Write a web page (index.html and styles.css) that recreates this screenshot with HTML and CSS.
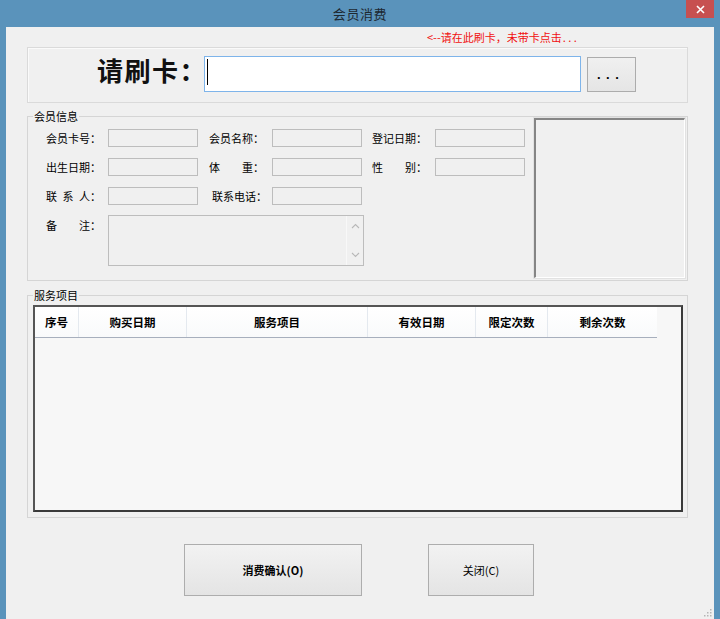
FILE: index.html
```html
<!DOCTYPE html>
<html lang="zh-CN">
<head>
<meta charset="utf-8">
<title>会员消费</title>
<link rel="stylesheet" href="styles.css">
</head>
<body>
<div class="window">
  <div class="titlebar">
    <span class="title">会员消费</span>
    <button class="close" type="button" aria-label="关闭">
      <svg width="9" height="9" viewBox="0 0 9 9"><path d="M1 1 L8 8 M8 1 L1 8" stroke="#fff" stroke-width="1.6" fill="none"/></svg>
    </button>
  </div>
  <div class="client">
    <div class="hint">&lt;--请在此刷卡，未带卡点击<span class="hint-dots">...</span></div>

    <div class="swipe">
      <div class="swipe-label">请刷卡：</div>
      <div class="card-input"><span class="caret"></span></div>
      <button class="more" type="button">...</button>
    </div>

    <div class="group member">
      <span class="caption">会员信息</span>
      <div class="fields">
        <span class="lbl">会员卡号：</span><div class="field"></div>
        <span class="lbl c2">会员名称：</span><div class="field"></div>
        <span class="lbl c3">登记日期：</span><div class="field"></div>

        <span class="lbl">出生日期：</span><div class="field"></div>
        <span class="lbl c2">体　　重：</span><div class="field"></div>
        <span class="lbl c3">性　　别：</span><div class="field"></div>

        <span class="lbl">联&ensp;系&ensp;人：</span><div class="field"></div>
        <span class="lbl c2b">联系电话：</span><div class="field"></div>

        <span class="lbl memo-lbl">备　　注：</span>
        <div class="memo">
          <div class="memo-scroll">
            <svg width="9" height="6" viewBox="0 0 9 6"><path d="M1 5 L4.5 1.5 L8 5" stroke="#b8b8b8" stroke-width="1.1" fill="none"/></svg>
            <svg width="9" height="6" viewBox="0 0 9 6"><path d="M1 1 L4.5 4.5 L8 1" stroke="#b8b8b8" stroke-width="1.1" fill="none"/></svg>
          </div>
        </div>
      </div>
      <div class="photo"><div class="photo-inner"></div></div>
    </div>

    <div class="group service">
      <span class="caption">服务项目</span>
      <div class="grid-view">
        <div class="grid-header">
          <div class="hcell w-no">序号</div>
          <div class="hcell w-buy">购买日期</div>
          <div class="hcell w-item">服务项目</div>
          <div class="hcell w-valid">有效日期</div>
          <div class="hcell w-limit">限定次数</div>
          <div class="hcell w-left">剩余次数</div>
        </div>
      </div>
    </div>

    <div class="actions">
      <button class="btn btn-confirm" type="button">消费确认(O)</button>
      <button class="btn btn-close" type="button">关闭(C)</button>
    </div>

    <svg class="grip" width="8" height="8" viewBox="0 0 8 8">
      <rect x="6" y="0" width="1.5" height="1.5" fill="#b5b5b5"/>
      <rect x="3" y="3" width="1.5" height="1.5" fill="#b5b5b5"/>
      <rect x="6" y="3" width="1.5" height="1.5" fill="#b5b5b5"/>
      <rect x="0" y="6" width="1.5" height="1.5" fill="#b5b5b5"/>
      <rect x="3" y="6" width="1.5" height="1.5" fill="#b5b5b5"/>
      <rect x="6" y="6" width="1.5" height="1.5" fill="#b5b5b5"/>
    </svg>
  </div>
</div>
</body>
</html>
```

FILE: styles.css
```css
* { box-sizing: border-box; }

html, body {
  margin: 0;
  height: 100%;
}

body {
  background: #5a93bb;
  font-family: "Noto Sans CJK SC", "Noto Sans", sans-serif;
  font-size: 11px;
  color: #000;
  overflow: hidden;
}

.window {
  width: 720px;
  height: 619px;
  display: flex;
  flex-direction: column;
}

/* ---------- title bar ---------- */
.titlebar {
  flex: none;
  height: 27px;
  position: relative;
  display: flex;
  align-items: center;
  justify-content: center;
}

.title {
  font-size: 13px;
  line-height: 1;
  letter-spacing: 0.6px;
  color: #1d2831;
}

.close {
  position: absolute;
  top: 0;
  right: 6px;
  width: 28px;
  height: 18px;
  padding: 0;
  border: 0;
  background: #c75050;
  display: flex;
  align-items: center;
  justify-content: center;
}

/* ---------- client area ---------- */
.client {
  flex: 1;
  margin: 0 6px;
  padding-left: 21px;
  background: #f0f0f0;
  position: relative;
}

.hint {
  height: 20px;
  line-height: 20px;
  padding-left: 400px;
  color: #f01010;
  font-size: 11px;
  white-space: nowrap;
}

.hint-dots {
  letter-spacing: 2.5px;
  padding-left: 1px;
}

/* ---------- swipe card panel ---------- */
.swipe {
  width: 661px;
  height: 56px;
  border: 1px solid #dadada;
  box-shadow: inset 1px 1px 0 #fafafa;
  display: flex;
  align-items: flex-start;
  padding: 8px 0 0 69px;
}

.swipe-label {
  width: 107px;
  flex: none;
  font-size: 26px;
  font-weight: 700;
  line-height: 28px;
  letter-spacing: 1.5px;
  white-space: nowrap;
  color: #111;
}

.card-input {
  flex: none;
  width: 377px;
  height: 36px;
  border: 1px solid #7eb4ea;
  background: #fff;
  padding: 2px 0 0 2px;
}

.caret {
  display: block;
  width: 1px;
  height: 26px;
  background: #000;
}

.more {
  flex: none;
  margin: 1px 0 0 6px;
  width: 49px;
  height: 35px;
  border: 1px solid #acacac;
  background: linear-gradient(#f0f0f0, #e5e5e5);
  font-family: "Liberation Sans", sans-serif;
  font-weight: 700;
  font-size: 13px;
  letter-spacing: 5.5px;
  text-align: left;
  padding: 0 0 0 9px;
  color: #000;
}

/* ---------- group boxes ---------- */
.group {
  width: 661px;
  border: 1px solid #d5d5d5;
  position: relative;
}

.caption {
  position: absolute;
  top: -8px;
  left: 5px;
  padding: 0 1px;
  line-height: 14px;
  font-size: 11px;
  background: #f0f0f0;
}

.member {
  margin-top: 13px;
  height: 165px;
  display: flex;
  align-items: flex-start;
  padding: 0 1px 1px 18px;
}

.fields {
  margin-top: 12px;
  display: grid;
  grid-template-columns: 62px 90px 74px 90px 73px 90px;
  grid-template-rows: 18px 18px 18px 50px;
  row-gap: 11px;
  align-items: center;
}

.lbl {
  line-height: 18px;
  white-space: nowrap;
}

.lbl.c2 { padding-left: 11px; }
.lbl.c2b { padding-left: 14px; }
.lbl.c3 { padding-left: 10px; }

.field {
  height: 18px;
  border: 1px solid #bdbdbd;
  background: #f0f0f0;
}

.memo-lbl {
  grid-row: 4;
  grid-column: 1;
  align-self: start;
}

.memo {
  grid-row: 4;
  grid-column: 2 / span 3;
  align-self: start;
  margin-top: -1px;
  width: 256px;
  height: 51px;
  border: 1px solid #bdbdbd;
  background: #f0f0f0;
  display: flex;
  justify-content: flex-end;
}

.memo-scroll {
  width: 17px;
  height: 100%;
  border-left: 1px solid #f8f8f8;
  display: flex;
  flex-direction: column;
  align-items: center;
  justify-content: space-between;
  padding: 7px 0 7px;
}

.photo {
  margin-left: auto;
  width: 153px;
  height: 162px;
  border: 1px solid #e2e2e2;
}

.photo-inner {
  height: 100%;
  border-style: solid;
  border-width: 2px 1px 1px 2px;
  border-color: #858585 #ffffff #ffffff #858585;
}

/* ---------- service grid ---------- */
.service {
  margin-top: 14px;
  height: 223px;
  padding: 9px 4px 5px 5px;
}

.grid-view {
  height: 207px;
  border: 2px solid #3a3a3a;
  border-top-color: #555;
  border-left-color: #555;
  background: #f7f7f7;
}

.grid-header {
  display: flex;
  width: 622px;
  height: 31px;
  border-bottom: 1px solid #a7afbd;
  background: linear-gradient(#ffffff, #f9fafb);
}

.hcell {
  height: 30px;
  line-height: 30px;
  text-align: center;
  font-size: 11.5px;
  font-weight: 700;
  border-right: 1px solid #e4e9ef;
  white-space: nowrap;
}

.w-no { width: 44px; }
.w-buy { width: 108px; }
.w-item { width: 181px; }
.w-valid { width: 108px; }
.w-limit { width: 72px; }
.w-left { width: 109px; border-right: 0; }

/* ---------- buttons ---------- */
.actions {
  display: flex;
  gap: 66px;
  margin-top: 26px;
  padding-left: 157px;
}

.btn {
  height: 52px;
  border: 1px solid #adadad;
  background: linear-gradient(#f2f2f2, #e4e4e4);
  font-family: "Noto Sans CJK SC", "Noto Sans", sans-serif;
  font-size: 11px;
  color: #000;
  padding: 0;
}

.btn-confirm {
  width: 178px;
  font-weight: 700;
}

.btn-close {
  width: 106px;
}

.grip {
  position: absolute;
  right: 2px;
  bottom: 2px;
}
```
